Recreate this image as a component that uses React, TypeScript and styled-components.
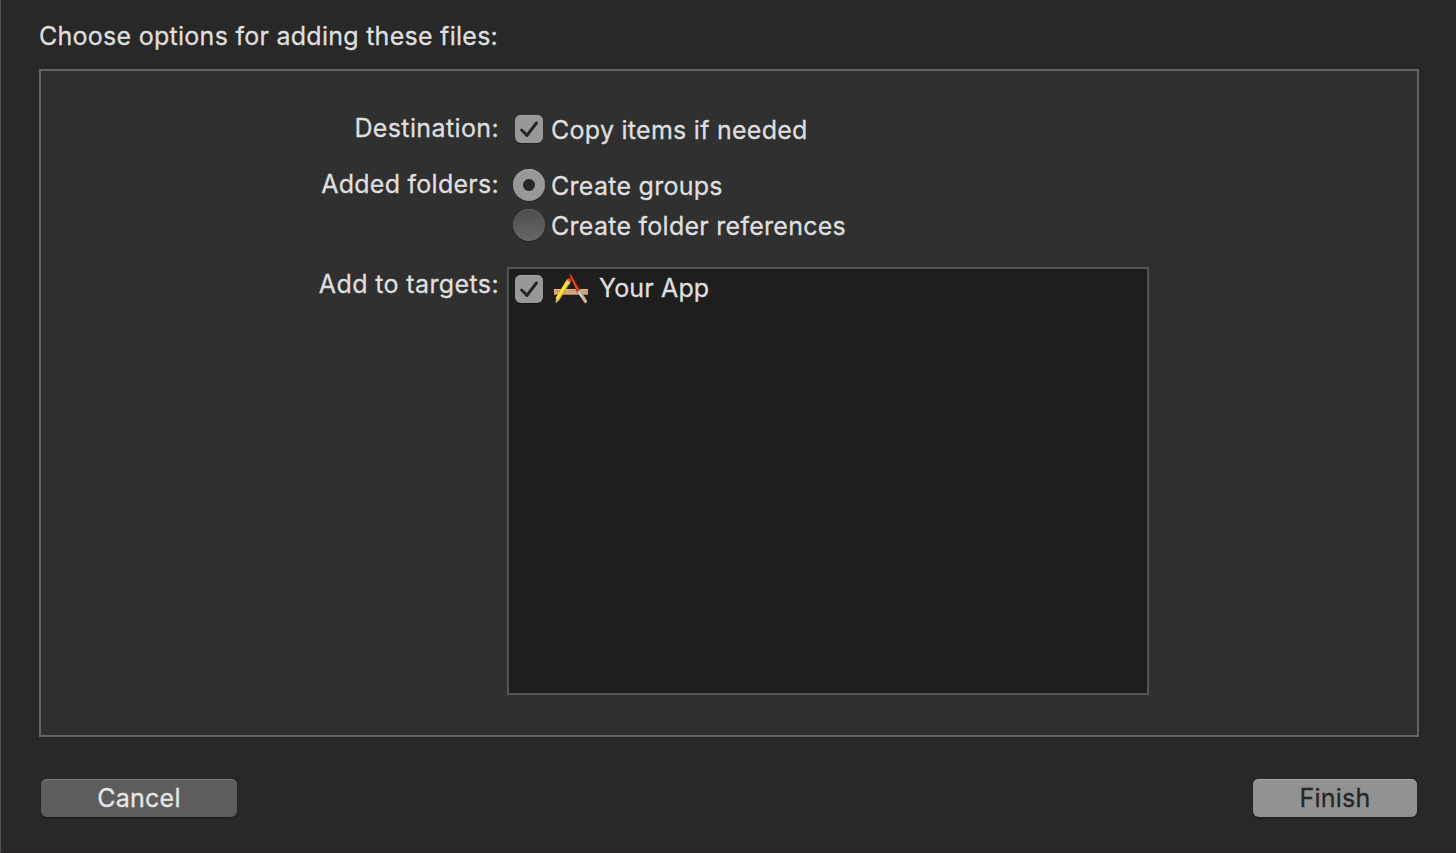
import React from "react";
import styled, { createGlobalStyle } from "styled-components";

const GlobalStyle = createGlobalStyle`
  *, *::before, *::after { box-sizing: border-box; }
  body { margin: 0; background: #282828; overflow: hidden; }
`;

const Sheet = styled.main`
  display: flex;
  flex-direction: column;
  width: 1456px;
  height: 853px;
  padding: 20px 37px 35px 38px;
  border-left: 1px solid #525252;
  border-bottom: 1px solid #2a2026;
  background: #282828;
  color: #dfdfdf;
  font-family: Inter, "Liberation Sans", sans-serif;
  font-size: 25px;
  line-height: 32px;
  -webkit-font-smoothing: antialiased;
`;

const Text = styled.span<{ $tracking?: number }>`
  letter-spacing: ${(p) => p.$tracking ?? 0.27}px;
  -webkit-text-stroke: 0.3px currentColor;
  white-space: nowrap;
`;

const Heading = styled.h1`
  margin: 0 0 17px;
  font-size: inherit;
  font-weight: 400;
  line-height: 32px;
`;

const Panel = styled.section`
  display: flex;
  flex-direction: column;
  height: 668px;
  padding-top: 41px;
  border: 2px solid #646464;
  background: #303030;
`;

const Row = styled.div<{ $height: number }>`
  display: flex;
  gap: 8px;
  height: ${(p) => p.$height}px;
`;

const Label = styled.div<{ $drop?: number }>`
  width: 458px;
  padding-top: ${(p) => p.$drop ?? 0}px;
  text-align: right;
`;

const Options = styled.div`
  display: flex;
  flex-direction: column;
  gap: 6px;
`;

const Option = styled.label`
  display: flex;
  align-items: center;
  height: 34px;
`;

const OptionText = styled.span`
  padding: 2px 0 0 6px;
`;

const ControlSlot = styled.span`
  display: flex;
  justify-content: center;
  width: 32px;
  margin-left: 6px;
`;

const CheckboxBox = styled.span`
  display: flex;
  width: 28px;
  height: 28px;
  border-radius: 6px;
  background: #989898;
  box-shadow: inset 0 1px 0 #a3a3a3, 0 1px 1px rgba(0, 0, 0, 0.3);
`;

const RadioDot = styled.span<{ $on?: boolean }>`
  display: flex;
  align-items: center;
  justify-content: center;
  width: 32px;
  height: 32px;
  border-radius: 50%;
  background: ${(p) => (p.$on ? "#989898" : "linear-gradient(#4d4d4d, #686868)")};
  box-shadow: inset 0 1px 0 ${(p) => (p.$on ? "#a5a5a5" : "#636363")}, 0 1px 1px rgba(0, 0, 0, 0.3);

  &::after {
    content: "";
    width: 12px;
    height: 12px;
    border-radius: 50%;
    background: ${(p) => (p.$on ? "#272727" : "transparent")};
  }
`;

const TargetList = styled.ul`
  width: 642px;
  height: 428px;
  margin: 0;
  padding: 3px 0 0;
  border: 2px solid #545454;
  background: #1e1e1e;
  list-style: none;
`;

const TargetItem = styled.li`
  display: flex;
  align-items: flex-start;
  height: 34px;
`;

const TargetCheck = styled.span`
  padding: 3px 10px 0 6px;
`;

const TargetIcon = styled.span`
  display: flex;
  width: 36px;
  margin-right: 10px;
`;

const Footer = styled.footer`
  display: flex;
  justify-content: space-between;
  margin-top: 42px;
  padding: 0 2px;
`;

const PushButton = styled.button<{ $primary?: boolean }>`
  width: ${(p) => (p.$primary ? 164 : 196)}px;
  height: 38px;
  padding: 0 0 1px;
  border: 0;
  border-radius: 6px;
  background: ${(p) => (p.$primary ? "#929292" : "#5d5d5d")};
  box-shadow: inset 0 1px 0 ${(p) => (p.$primary ? "#a8a8a8" : "#7b7b7b")}, 0 1px 2px rgba(0, 0, 0, 0.35);
  color: ${(p) => (p.$primary ? "#262626" : "#e6e6e6")};
  font: inherit;
`;

function Checkbox() {
  return (
    <CheckboxBox>
      <svg width="28" height="28" viewBox="0 0 28 28" fill="none">
        <path d="M6.6 15 L12 20.4 L21.4 8" stroke="#242424" strokeWidth="3" strokeLinecap="round" strokeLinejoin="round" />
      </svg>
    </CheckboxBox>
  );
}

function AppIcon() {
  return (
    <svg width="36" height="32" viewBox="0 0 36 32">
      <rect x="1" y="17" width="34" height="6" fill="#d9a679" />
      <rect x="1" y="17" width="34" height="1" fill="#e6b98d" />
      <rect x="1" y="22" width="34" height="1" fill="#ad7c50" />
      <path d="M4 18v2M7 18v1.5M10 18v2M16 18v1.5M19 18v2M22 18v1.5M31 18v1.5M33.5 18v2" stroke="#a57448" strokeWidth=".7" />
      <path d="M14.1 7.1 L18 9.4 L6.6 27.7 L2.7 31 L3 25.3Z" fill="#e0a516" />
      <path d="M14 8 L16.7 9.6 L5.5 27.4 L3 25.9Z" fill="#fbe636" />
      <path d="M3.1 26 L6.4 27.9 L2.7 31Z" fill="#d9b57c" />
      <path d="M13.9 8 L17.6 10.2 L18.3 8.4 Q17.8 6 15.3 5.9Z" fill="#e8452f" />
      <path d="M12.9 9.6 L16.6 11.8" stroke="#d5d0c4" strokeWidth="1.4" />
      <path d="M15.9 1.1 L18.6 3.3 L28 19.3 L24.2 21.2Z" fill="#b02c10" />
      <path d="M17.3 3.6 L25.7 19.7" stroke="#ea5a2c" strokeWidth="1.1" />
      <path d="M24 19.5 L27.6 17.6 L31 24 L28 25.8Z" fill="#a3a9ae" />
      <path d="M25.6 19.6 L29 25.2" stroke="#e6eaec" strokeWidth="1.2" />
      <path d="M28 25.4 L31 23.8 L34.2 29.4 L32.8 31.2 L31.2 30.6Z" fill="#e3b296" />
    </svg>
  );
}

export default function App() {
  return (
    <>
      <GlobalStyle />
      <Sheet>
        <Heading>
          <Text>Choose options for adding these files:</Text>
        </Heading>
        <Panel>
          <Row $height={56}>
            <Label><Text $tracking={0.38}>Destination:</Text></Label>
            <Options>
              <Option>
                <ControlSlot><Checkbox /></ControlSlot>
                <OptionText><Text>Copy items if needed</Text></OptionText>
              </Option>
            </Options>
          </Row>
          <Row $height={99}>
            <Label><Text>Added folders:</Text></Label>
            <Options>
              <Option>
                <ControlSlot><RadioDot $on /></ControlSlot>
                <OptionText><Text>Create groups</Text></OptionText>
              </Option>
              <Option>
                <ControlSlot><RadioDot /></ControlSlot>
                <OptionText><Text>Create folder references</Text></OptionText>
              </Option>
            </Options>
          </Row>
          <Row $height={428}>
            <Label $drop={1}><Text $tracking={0.38}>Add to targets:</Text></Label>
            <TargetList>
              <TargetItem>
                <TargetCheck><Checkbox /></TargetCheck>
                <TargetIcon><AppIcon /></TargetIcon>
                <Text $tracking={0.15}>Your App</Text>
              </TargetItem>
            </TargetList>
          </Row>
        </Panel>
        <Footer>
          <PushButton><Text>Cancel</Text></PushButton>
          <PushButton $primary><Text>Finish</Text></PushButton>
        </Footer>
      </Sheet>
    </>
  );
}
